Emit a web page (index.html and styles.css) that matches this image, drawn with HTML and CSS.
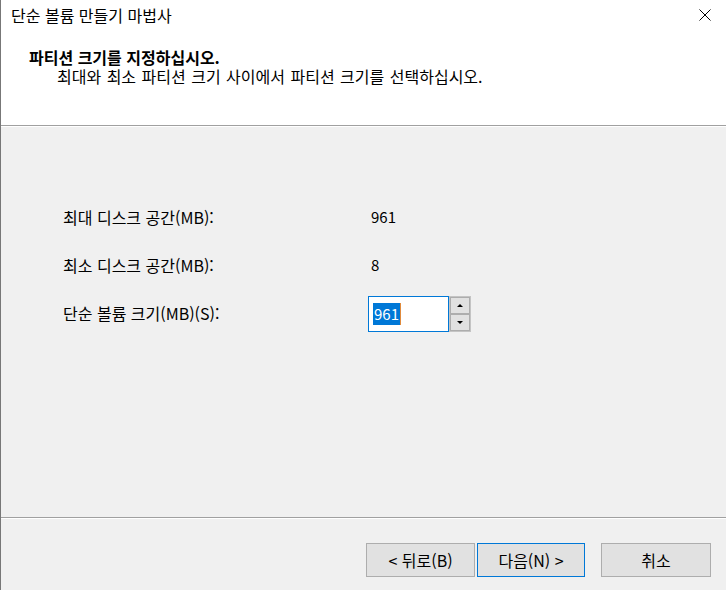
FILE: index.html
```html
<!DOCTYPE html>
<html lang="ko">
<head>
<meta charset="utf-8">
<title>단순 볼륨 만들기 마법사</title>
<link rel="stylesheet" href="styles.css">
</head>
<body>
<div class="window">
  <div class="titlebar">
    <span class="title">단순 볼륨 만들기 마법사</span>
    <span class="close">
      <svg width="12" height="12" viewBox="0 0 12 12"><path d="M0.5 0.5 L11.5 11.5 M11.5 0.5 L0.5 11.5" stroke="#000" stroke-width="1" fill="none"/></svg>
    </span>
  </div>
  <div class="header">
    <div class="heading">파티션 크기를 지정하십시오.</div>
    <div class="subheading">최대와 최소 파티션 크기 사이에서 파티션 크기를 선택하십시오.</div>
  </div>
  <div class="sep"></div>
  <div class="content">
    <div class="row row-max">
      <span class="label">최대 디스크 공간(MB):</span>
      <span class="value">961</span>
    </div>
    <div class="row row-min">
      <span class="label">최소 디스크 공간(MB):</span>
      <span class="value">8</span>
    </div>
    <div class="row row-size">
      <span class="label">단순 볼륨 크기(MB)(S):</span>
      <div class="spin">
        <div class="spin-input"><span class="sel">961</span><span class="caret"></span></div>
        <div class="spin-buttons">
          <div class="spin-btn"><svg width="6" height="3" viewBox="0 0 6 3"><path d="M0 3 L3 0 L6 3 Z" fill="#000"/></svg></div>
          <div class="spin-btn"><svg width="6" height="3" viewBox="0 0 6 3"><path d="M0 0 L6 0 L3 3 Z" fill="#000"/></svg></div>
        </div>
      </div>
    </div>
  </div>
  <div class="sep"></div>
  <div class="footer">
    <button class="btn">&lt; 뒤로(B)</button>
    <button class="btn btn-default">다음(N) &gt;</button>
    <button class="btn btn-cancel">취소</button>
  </div>
</div>
</body>
</html>
```
FILE: styles.css
```css
html, body {
  margin: 0;
  padding: 0;
}
body {
  width: 726px;
  height: 590px;
  overflow: hidden;
  background: #fff;
  font-family: "Noto Sans CJK KR", "Noto Sans", sans-serif;
  font-size: 16px;
  color: #000;
}
.window {
  height: 590px;
  display: flex;
  flex-direction: column;
  border-left: 1px solid #777;
  box-sizing: border-box;
}
.titlebar {
  height: 30px;
  display: flex;
  align-items: center;
  justify-content: space-between;
  padding-left: 10px;
  padding-right: 15px;
  flex-shrink: 0;
}
.title {
  line-height: 20px;
  margin-top: -1px;
}
.close {
  display: flex;
  width: 12px;
  height: 12px;
}
.header {
  height: 95px;
  padding-left: 28px;
  box-sizing: border-box;
  padding-top: 18px;
  flex-shrink: 0;
}
.heading {
  font-weight: bold;
  line-height: 19px;
}
.subheading {
  padding-left: 28px;
  line-height: 18px;
  word-spacing: 1px;
}
.sep {
  height: 1px;
  background: #a0a0a0;
  border-bottom: 1px solid #fff;
  flex-shrink: 0;
}
.content {
  flex: 1;
  background: #f0f0f0;
  padding-top: 80px;
  padding-left: 62px;
  box-sizing: border-box;
}
.row {
  display: flex;
  align-items: center;
}
.label {
  width: 305px;
  line-height: 20px;
}
.value {
  padding-left: 3px;
  line-height: 20px;
  font-size: 15px;
}
.row-max { height: 20px; }
.row-min { height: 20px; margin-top: 28px; }
.row-size { height: 36px; margin-top: 21px; }
.row-size .label { margin-top: -3px; }
.spin {
  display: flex;
  height: 36px;
}
.spin-input {
  width: 81px;
  height: 36px;
  box-sizing: border-box;
  border: 1px solid #0078d7;
  background: #fff;
  display: flex;
  align-items: center;
  padding-left: 4px;
  font-size: 15px;
}
.sel {
  background: #0078d7;
  color: #fff;
  line-height: 22px;
  height: 22px;
  padding: 0 1px;
}
.caret {
  width: 1px;
  height: 22px;
  background: #e08a3c;
}
.spin-buttons {
  width: 22px;
  height: 36px;
  display: flex;
  flex-direction: column;
  box-sizing: border-box;
  border: 1px solid #c4c4c4;
  background: #e6e6e6;
}
.spin-btn {
  flex: 1;
  display: flex;
  align-items: center;
  justify-content: center;
  border: 1px solid #adadad;
  background: #e1e1e1;
}
.footer {
  height: 71px;
  background: #f0f0f0;
  display: flex;
  align-items: flex-start;
  padding-top: 24px;
  padding-left: 365px;
  box-sizing: border-box;
  flex-shrink: 0;
}
.btn {
  font-family: "Noto Sans CJK KR", "Noto Sans", sans-serif;
  font-size: 16px;
  color: #000;
  height: 34px;
  width: 109px;
  background: #e1e1e1;
  border: 1px solid #adadad;
  padding: 0;
  margin: 0;
  line-height: 20px;
}
.btn-default {
  width: 108px;
  margin-left: 2px;
  border-color: #0078d7;
}
.btn-cancel {
  width: 110px;
  margin-left: 16px;
}
```
